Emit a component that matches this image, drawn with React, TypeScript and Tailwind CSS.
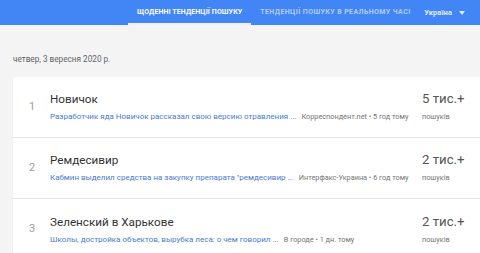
const items = [
  {
    rank: 1,
    title: "Новичок",
    article: "Разработчик яда Новичок рассказал свою версию отравления ...",
    source: "Корреспондент.net • 5 год тому",
    count: "5 тис.+",
  },
  {
    rank: 2,
    title: "Ремдесивир",
    article: "Кабмин выделил средства на закупку препарата \"ремдесивир ...",
    source: "Интерфакс-Украина • 6 год тому",
    count: "2 тис.+",
  },
  {
    rank: 3,
    title: "Зеленский в Харькове",
    article: "Школы, достройка объектов, вырубка леса: о чем говорил ...",
    source: "В городе • 1 дн. тому",
    count: "2 тис.+",
  },
];

function Header() {
  return (
    <header className="flex h-[25px] items-stretch whitespace-nowrap bg-[#4285f4] pl-[128px] pr-[15px] text-[7px] font-bold uppercase tracking-[0.1px]">
      <div className="flex shrink-0 items-center border-b-2 border-[#f0f0f0] px-[9px] pt-[1px] text-white">
        Щоденні тенденції пошуку
      </div>
      <div className="flex shrink-0 items-center px-[9px] tracking-[0.4px] text-white/60">
        Тенденції пошуку в реальному часі
      </div>
      <div className="ml-auto flex shrink-0 items-center gap-[7px] text-[7.5px] normal-case text-white/85">
        <span>Україна</span>
        <svg width="6" height="4" viewBox="0 0 6 4">
          <path d="M0 0h6L3 4z" fill="rgba(255,255,255,0.85)" />
        </svg>
      </div>
    </header>
  );
}

function Row({ item, last }: { item: (typeof items)[number]; last: boolean }) {
  return (
    <li
      className={`flex h-[61px] items-center ${last ? "" : "border-b border-[#e6e6e6]"}`}
    >
      <div className="w-[37px] pl-[16px] text-[11px] text-[#9e9e9e]">{item.rank}</div>
      <div className="flex min-w-0 flex-1 flex-col">
        <div className="text-[11.7px] leading-[16px] text-[#333333]">{item.title}</div>
        <div className="mt-[4px] flex items-baseline whitespace-nowrap">
          <span className="text-[8px] text-[#4a7bd0]">{item.article}</span>
          <span className="ml-[5px] text-[7.3px] text-[#757575]">{item.source}</span>
        </div>
      </div>
      <div className="flex w-[71px] shrink-0 flex-col">
        <div className="text-[13.2px] leading-[16px] text-[#555555]">{item.count}</div>
        <div className="mt-[5px] text-[7.3px] text-[#757575]">пошуків</div>
      </div>
    </li>
  );
}

export default function App() {
  return (
    <div className="h-[253px] overflow-hidden bg-[#f4f4f4] font-['Roboto',sans-serif]">
      <Header />
      <div className="pl-[13px]">
        <div className="pt-[29px] pb-[12px] text-[8.2px] leading-[11px] text-[#5f6368]">
          четвер, 3 вересня 2020 р.
        </div>
        <ul className="w-[480px] rounded-l-[2px] bg-white shadow-[0_0_1px_rgba(0,0,0,0.12)]">
          {items.map((item, i) => (
            <Row key={item.rank} item={item} last={i === items.length - 1} />
          ))}
        </ul>
      </div>
    </div>
  );
}
